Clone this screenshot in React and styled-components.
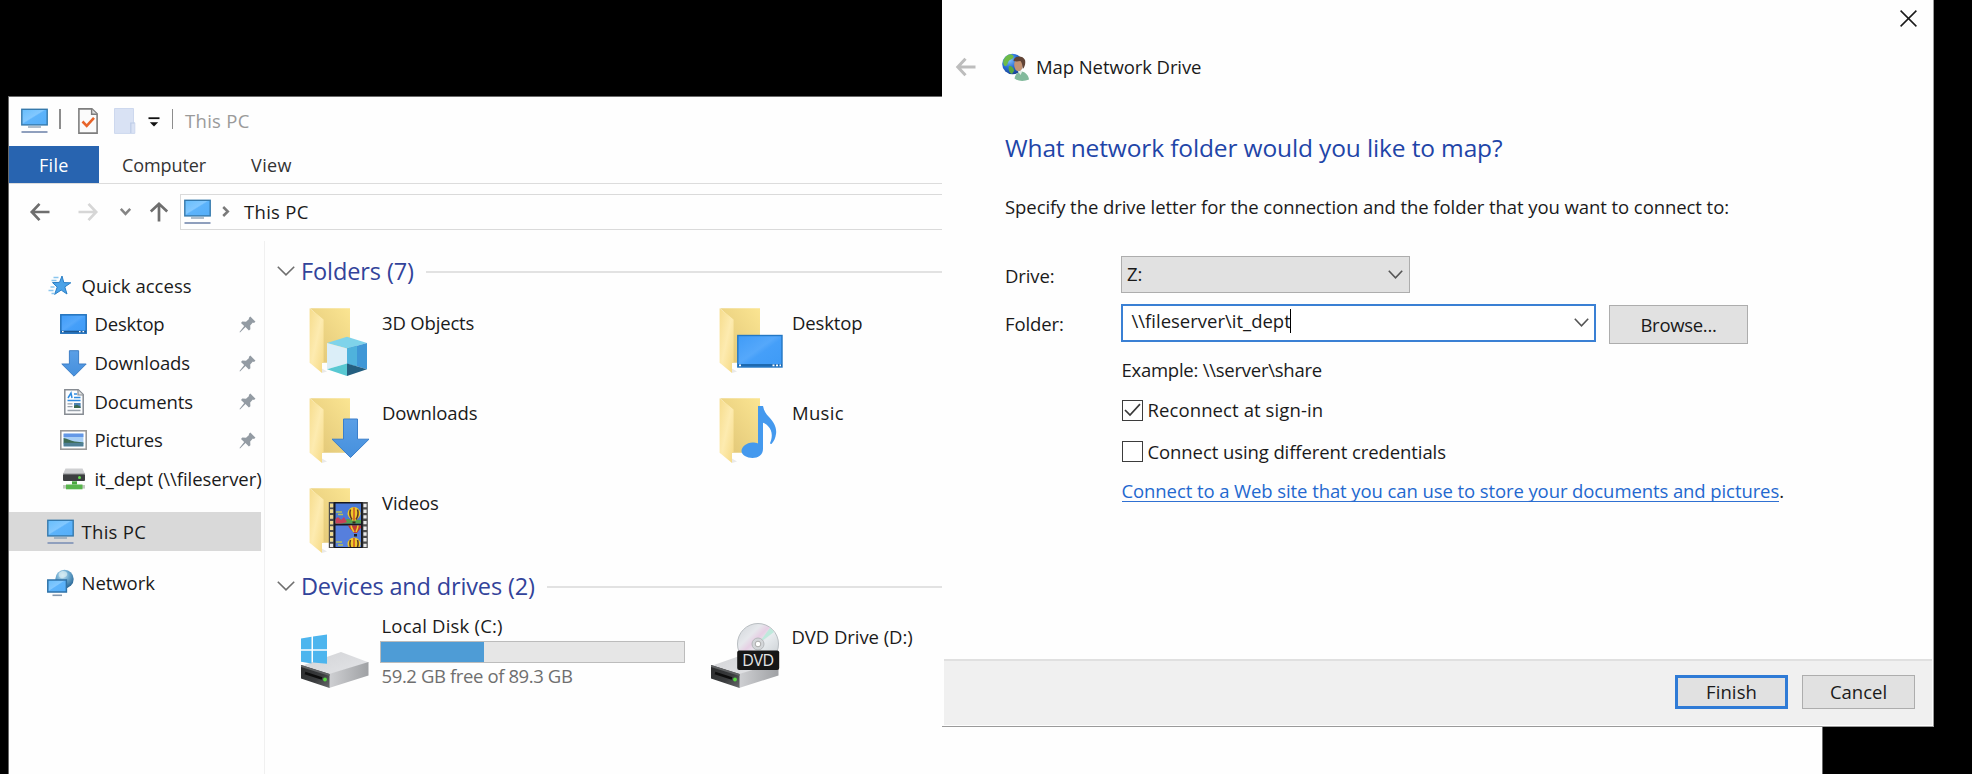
import React from "react";
import styled, { createGlobalStyle } from "styled-components";

const GlobalStyle = createGlobalStyle`
  * { box-sizing: border-box; }
  body { margin: 0; background: #000; overflow: hidden; }
`;

const Screen = styled.div`
  position: relative;
  width: 1972px;
  height: 774px;
  overflow: hidden;
  background: #000;
  color: #1a1a1a;
  font-family: "Open Sans", "Noto Sans", sans-serif;
  font-size: 18.5px;
  line-height: 26px;
`;

const Text = styled.span`
  white-space: pre;
  flex: none;
  color: ${(p) => p.$color || "inherit"};
  font-size: ${(p) => p.$size || 18.5}px;
  letter-spacing: ${(p) => p.$track || 0}px;
`;

const Glyph = styled.svg`
  display: block;
  flex: none;
  overflow: visible;
`;

/* ---------- Explorer window ---------- */

const Explorer = styled.section`
  position: absolute;
  left: 8px;
  top: 96px;
  width: 1815px;
  height: 700px;
  display: flex;
  flex-direction: column;
  background: #fefefe;
  border: 1px solid #6a6a6a;
`;

const TitleBar = styled.header`
  display: flex;
  align-items: center;
  height: 49px;
  padding: 0 0 1px 12px;
`;

const Divider = styled.i`
  width: 1.5px;
  height: 20px;
  background: #8d8d8d;
  margin: 0 ${(p) => p.$after}px 4px ${(p) => p.$before}px;
`;

const QuickButton = styled.span`
  display: flex;
  margin-right: ${(p) => p.$gap}px;
`;

const Ribbon = styled.nav`
  display: flex;
  height: 38px;
  border-bottom: 1.5px solid #dcdcdc;
`;

const RibbonTab = styled.div`
  display: flex;
  align-items: center;
  height: 37px;
  padding-left: ${(p) => p.$inset}px;
  width: ${(p) => p.$width}px;
  color: ${(p) => (p.$active ? "#fff" : "#333")};
  background: ${(p) => (p.$active ? "#2864b0" : "transparent")};
`;

const NavBar = styled.div`
  display: flex;
  align-items: center;
  height: 57px;
  padding: 0 0 2px 21px;
`;

const NavButton = styled.span`
  display: flex;
  justify-content: center;
  width: ${(p) => p.$width}px;
  margin-right: ${(p) => p.$gap}px;
`;

const AddressBar = styled.div`
  display: flex;
  flex: 1;
  align-items: center;
  height: 36px;
  padding-left: 3px;
  border: 1.5px solid #dadada;
  border-right: 0;
`;

const Panes = styled.div`
  display: flex;
  flex: 1;
`;

const Sidebar = styled.aside`
  width: 256px;
  padding-top: 25.5px;
  border-right: 1px solid #f0f0f0;
`;

const SideRow = styled.div`
  display: flex;
  align-items: center;
  width: 252px;
  height: 38.67px;
  margin-top: ${(p) => p.$before || 0}px;
  padding-left: ${(p) => (p.$child ? 51 : 38)}px;
  background: ${(p) => (p.$selected ? "#d9d9d9" : "transparent")};
`;

const SideIcon = styled.span`
  display: flex;
  flex: none;
  justify-content: center;
  width: 27px;
  margin-right: 7.5px;
`;

const PinSlot = styled.span`
  display: flex;
  margin-left: auto;
  margin-right: 5px;
`;

const Content = styled.main`
  width: 677px;
  padding: 14.5px 0 0 12px;
`;

const GroupHeader = styled.h2`
  display: flex;
  align-items: center;
  height: 30px;
  margin: ${(p) => p.$shift || 0}px 0 15px;
  font-weight: 400;
`;

const GroupRule = styled.i`
  flex: 1;
  height: 1.5px;
  margin: 3px 0 0 12px;
  background: #e2e2e2;
`;

const FolderGrid = styled.div`
  display: grid;
  grid-template-columns: 410px 1fr;
  grid-auto-rows: 90.4px;
  padding-left: 28px;
`;

const FolderTile = styled.div`
  display: flex;
`;

const FolderName = styled.div`
  padding: 9px 0 0 5px;
`;

const DriveGrid = styled.div`
  display: grid;
  grid-template-columns: 410px 1fr;
  padding-left: 23px;
`;

const DriveTile = styled.div`
  display: flex;
`;

const DriveIcon = styled.span`
  display: flex;
  padding-top: 5px;
`;

const DriveInfo = styled.div`
  display: flex;
  flex-direction: column;
  padding-top: ${(p) => p.$top}px;
  padding-left: ${(p) => p.$left || 0}px;
  margin-top: -3px;
`;

const DriveLabel = styled.div`
  padding-left: 1.5px;
`;

const Usage = styled.div`
  width: 305px;
  height: 22px;
  margin: 2px 0 0;
  border: 1.5px solid #bcbcbc;
  background: #e6e6e6;
`;

const UsageFill = styled.div`
  width: ${(p) => p.$percent}%;
  height: 100%;
  background: #4e9cd6;
`;

/* ---------- Map Network Drive dialog ---------- */

const Dialog = styled.section`
  position: absolute;
  left: 942px;
  top: 0;
  width: 992px;
  height: 727px;
  display: flex;
  flex-direction: column;
  background: #fefefe;
  border-right: 1px solid #9a9a9a;
  border-bottom: 1px solid #9a9a9a;
`;

const CloseRow = styled.div`
  display: flex;
  justify-content: flex-end;
  height: 52px;
  padding: 10px 16px 0 0;
`;

const DialogHead = styled.header`
  display: flex;
  align-items: center;
  height: 30px;
  padding-left: 14px;
`;

const DialogIcon = styled.span`
  display: flex;
  margin: 0 7px 0 26px;
`;

const Form = styled.div`
  flex: 1;
  padding-left: 63px;
`;

const Question = styled.h1`
  display: flex;
  margin: 51px 0 0;
  line-height: 30px;
  font-weight: 400;
`;

const Hint = styled.p`
  display: flex;
  margin: 31px 0 36px;
`;

const Field = styled.div`
  display: flex;
  align-items: flex-start;
  height: ${(p) => p.$height}px;
`;

const FieldLabel = styled.label`
  width: 116px;
  padding-top: 7px;
`;

const DriveSelect = styled.div`
  display: flex;
  align-items: center;
  justify-content: space-between;
  width: 289px;
  height: 37px;
  padding: 0 6px 1px 5px;
  border: 1.5px solid #adadad;
  background: #e1e1e1;
`;

const FolderInput = styled.div`
  display: flex;
  align-items: center;
  width: 475px;
  height: 38px;
  padding: 0 5px 4px 8.5px;
  border: 2px solid #3a80d4;
  background: #fff;
`;

const Caret = styled.i`
  width: 1.5px;
  height: 24px;
  margin-right: auto;
  margin-left: -1px;
  background: #000;
`;

const ListArrow = styled.span`
  display: flex;
  padding-top: 3px;
`;

const PushButton = styled.button`
  display: flex;
  align-items: center;
  justify-content: center;
  width: ${(p) => p.$width}px;
  height: ${(p) => p.$height}px;
  margin: ${(p) => p.$margin};
  padding: 0;
  color: inherit;
  font: inherit;
  background: #e1e1e1;
  border: ${(p) => (p.$primary ? "3px solid #2f7bd6" : "1.5px solid #adadad")};
`;

const Options = styled.div`
  display: flex;
  flex-direction: column;
  padding-left: 116.5px;
`;

const OptionLine = styled.div`
  display: flex;
  align-items: center;
  height: 26px;
  margin-top: ${(p) => p.$before}px;
`;

const CheckBox = styled.span`
  display: flex;
  align-items: center;
  justify-content: center;
  width: 21px;
  height: 21px;
  margin-right: 5px;
  border: 1.5px solid #3c3c3c;
  background: #fff;
`;

const WebLink = styled.a`
  display: flex;
  color: #2368cf;
  border-bottom: 1.5px solid #2f70d2;
  line-height: 21px;
`;

const DialogFooter = styled.footer`
  display: flex;
  justify-content: flex-end;
  height: 66px;
  margin: 0 1px 1px 2px;
  padding: 14px 17px 0 0;
  border-top: 2px solid #e0e0e0;
  background: #f0f0f0;
`;

/* ---------- Icons ---------- */

const Gradients = () => (
  <Glyph width="0" height="0" aria-hidden="true">
    <defs>
      <linearGradient id="screenBlue" x1="0" y1="0" x2="1" y2="1">
        <stop offset="0" stopColor="#66bdfb" />
        <stop offset="0.45" stopColor="#82c8ff" />
        <stop offset="0.5" stopColor="#5cb3fb" />
        <stop offset="1" stopColor="#55aef8" />
      </linearGradient>
      <linearGradient id="deskBlue" x1="0" y1="0" x2="1" y2="1">
        <stop offset="0" stopColor="#3f9bf7" />
        <stop offset="0.45" stopColor="#55a8fb" />
        <stop offset="0.55" stopColor="#459ff9" />
        <stop offset="1" stopColor="#3d9af6" />
      </linearGradient>
      <linearGradient id="folderBack" x1="0" y1="1" x2="1" y2="0">
        <stop offset="0" stopColor="#dfc475" />
        <stop offset="1" stopColor="#fbe592" />
      </linearGradient>
      <linearGradient id="folderFront" x1="0" y1="0" x2="1" y2="1">
        <stop offset="0" stopColor="#f6dc8c" />
        <stop offset="0.5" stopColor="#fdebb0" />
        <stop offset="1" stopColor="#f5d984" />
      </linearGradient>
      <linearGradient id="arrowBlue" x1="0" y1="0" x2="0" y2="1">
        <stop offset="0" stopColor="#5a9fe6" />
        <stop offset="1" stopColor="#4690dd" />
      </linearGradient>
      <linearGradient id="driveTop" x1="0" y1="0" x2="1" y2="1">
        <stop offset="0" stopColor="#d2d3d6" />
        <stop offset="1" stopColor="#e4e5e8" />
      </linearGradient>
      <linearGradient id="driveSide" x1="0" y1="0" x2="1" y2="0">
        <stop offset="0" stopColor="#cfd0d3" />
        <stop offset="1" stopColor="#9fa1a4" />
      </linearGradient>
      <linearGradient id="driveFace" x1="0" y1="0" x2="1" y2="1">
        <stop offset="0" stopColor="#2a2b2c" />
        <stop offset="0.6" stopColor="#3a3c3e" />
        <stop offset="1" stopColor="#6a6c6e" />
      </linearGradient>
      <radialGradient id="globe" cx="0.4" cy="0.3" r="0.7">
        <stop offset="0" stopColor="#cfe9f5" />
        <stop offset="0.5" stopColor="#6ba9cf" />
        <stop offset="1" stopColor="#2d6a99" />
      </radialGradient>
      <radialGradient id="earth" cx="0.35" cy="0.3" r="0.75">
        <stop offset="0" stopColor="#86c4fa" />
        <stop offset="0.5" stopColor="#2a70d8" />
        <stop offset="1" stopColor="#173f8f" />
      </radialGradient>
      <linearGradient id="disc" x1="0" y1="0" x2="1" y2="1">
        <stop offset="0" stopColor="#cfd4d8" />
        <stop offset="0.3" stopColor="#e6e8ec" />
        <stop offset="0.42" stopColor="#e6cfe4" />
        <stop offset="0.55" stopColor="#e8ecef" />
        <stop offset="1" stopColor="#c3c8cc" />
      </linearGradient>
    </defs>
  </Glyph>
);

const PcIcon = () => (
  <Glyph width="27" height="26" viewBox="0 0 27 26">
    <rect x="0.8" y="1.3" width="25.4" height="15.6" fill="url(#screenBlue)" stroke="#3579ac" strokeWidth="1.4" />
    <path d="M7 19h13" stroke="#8fa3b5" strokeWidth="1.4" />
    <path d="M0.5 24h26" stroke="#8f9fbd" strokeWidth="2" />
  </Glyph>
);

const CheckedPageIcon = () => (
  <Glyph width="20" height="26" viewBox="0 0 20 26">
    <path d="M0.9 0.9h13l5.2 5v19.2H0.9z" fill="#fbfbfb" stroke="#7e7e7e" strokeWidth="1.6" />
    <path d="M13.6 1v5.2h5.4" fill="#ddd" stroke="#7e7e7e" strokeWidth="1.4" />
    <path d="M4.5 13.5l4.2 4.3 7.3-8" fill="none" stroke="#e8642a" strokeWidth="2.6" />
  </Glyph>
);

const PaleFolderIcon = () => (
  <Glyph width="21" height="26" viewBox="0 0 21 26">
    <path d="M0.5 0.5h19v14.3h1.3v10.6H0.5z" fill="#d9e2f4" stroke="#cdd8ee" />
    <path d="M16.8 25V15h3.6" fill="none" stroke="#bccbe6" strokeWidth="1.2" />
  </Glyph>
);

const MenuArrowIcon = () => (
  <Glyph width="12" height="11" viewBox="0 0 12 11">
    <path d="M0.5 2.2h11" stroke="#111" strokeWidth="1.8" />
    <path d="M1.8 6.2h8.4L6 10.6z" fill="#111" />
  </Glyph>
);

const ArrowIcon = ({ color, turn = 0, size = 20, weight = 2.7 }) => (
  <Glyph width={size} height={size} viewBox="0 0 20 20">
    <path d="M19.5 10H2M9.5 1.8L1.8 10l7.7 8.2" fill="none" stroke={color} strokeWidth={weight} transform={`rotate(${turn} 10 10)`} />
  </Glyph>
);

const ChevronIcon = ({ width, height, color = "#777", weight = 1.6 }) => (
  <Glyph width={width} height={height} viewBox={`0 0 ${width} ${height}`}>
    <path d={`M0.8 0.8L${width / 2} ${height - 1.2}L${width - 0.8} 0.8`} fill="none" stroke={color} strokeWidth={weight} />
  </Glyph>
);

const CrumbIcon = () => (
  <Glyph width="8" height="11" viewBox="0 0 8 11">
    <path d="M1.2 1L5.8 5.5 1.2 10" fill="none" stroke="#7a7a7a" strokeWidth="2.5" />
  </Glyph>
);

const StarIcon = () => (
  <Glyph width="18" height="22" viewBox="4.5 0 18 22">
    <path d="M14.5 1l1.8 6.6 7 .2-6 4.1 2.2 7.1-5.8-3.9-6.6 4.3 2.6-7.3L5 7.6l7-.2z" fill="#4ba3e8" stroke="#2b7fc6" strokeWidth="1" />
    <path d="M6 2.5h5M4 5.5h5M3 12h4M1 15.5h5M4 18.5h3" stroke="#8ac5ee" strokeWidth="1.3" />
  </Glyph>
);

const DesktopIcon = () => (
  <Glyph width="27" height="20" viewBox="0 0 27 20">
    <rect x="0.8" y="0.8" width="25.4" height="18.4" fill="url(#deskBlue)" stroke="#2272bd" strokeWidth="1.5" />
    <path d="M1 17.6h25" stroke="#1d5791" strokeWidth="1.8" />
    <path d="M2 17.6h1.6M19 17.6h1.6M22.5 17.6h1.6" stroke="#fff" strokeWidth="1.4" />
  </Glyph>
);

const DownloadIcon = () => (
  <Glyph width="26" height="27" viewBox="0 0 26 27">
    <path d="M8.4 0.7h9.2V14h7.6L13 26.2 0.8 14h7.6z" fill="url(#arrowBlue)" stroke="#3f7fc6" />
  </Glyph>
);

const DocumentIcon = () => (
  <Glyph width="20" height="26" viewBox="0 0 20 26">
    <path d="M0.8 0.8h13.4l5 4.8v19.6H0.8z" fill="#fcfdfe" stroke="#868b92" strokeWidth="1.5" />
    <path d="M14 1v5h5" fill="#e3e3e3" stroke="#868b92" strokeWidth="1.2" />
    <path d="M4 9l3-5 1 5M10 5h3M10 8.5h6.5M3.5 11.5h13" fill="none" stroke="#2f8be0" strokeWidth="1.5" />
    <path d="M3.5 14.8h5M3.5 17.6h5M3.5 21.5h13" stroke="#9aa2ab" strokeWidth="1.3" />
    <rect x="10" y="14" width="6.6" height="5" fill="#4c82b4" />
    <path d="M10 19v-2.2l3-1 3.6 2V19z" fill="#3c6a50" />
  </Glyph>
);

const PictureIcon = () => (
  <Glyph width="27" height="20" viewBox="0 0 27 20">
    <rect x="0.8" y="0.8" width="25.4" height="18.4" fill="#fff" stroke="#9a9a9a" strokeWidth="1.6" />
    <rect x="3.6" y="3.6" width="19.8" height="12.8" fill="#a9cff5" />
    <rect x="3.6" y="3.6" width="19.8" height="3.4" fill="#6397e6" />
    <path d="M3.6 8c4 .5 7 3 11 3.6s6 .6 8.8 1v1H3.6z" fill="#3d6b54" />
    <path d="M3.6 12.8h19.8v3.6H3.6z" fill="#4f7f95" />
  </Glyph>
);

const NetDriveIcon = () => (
  <Glyph width="24" height="22" viewBox="0 0 24 22">
    <path d="M3.5 0.5h17l2.5 5.5H1z" fill="#cfd0d2" />
    <rect x="1" y="6" width="22" height="7" rx="1" fill="#3c3e40" />
    <path d="M1 6h22" stroke="#8d8f91" />
    <circle cx="17.5" cy="9.5" r="1.5" fill="#62e04c" />
    <path d="M10 13.3h5v3.2h-5z" fill="#4aa83f" />
    <path d="M1 18.8h22" stroke="#c2cabf" strokeWidth="3.6" />
    <path d="M4 16.5h16.5v4.8H4z" fill="#58b54c" />
  </Glyph>
);

const NetworkIcon = () => (
  <Glyph width="27" height="28" viewBox="0 0 27 28">
    <circle cx="17.5" cy="10" r="9.2" fill="url(#globe)" />
    <path d="M12 4c3-3 7-2 8 0s-1 4-4 5-5-2-4-5z" fill="#d7ecf2" opacity="0.7" />
    <rect x="0.8" y="11" width="18.6" height="12" fill="url(#screenBlue)" stroke="#2f72a8" strokeWidth="1.5" />
    <path d="M5.5 26.3h9.5" stroke="#8497ad" strokeWidth="1.6" />
  </Glyph>
);

const PinIcon = () => (
  <Glyph width="17" height="17" viewBox="0 0 17 17">
    <path d="M11.3 0.5l5.2 5.2-1.6 1.2-1-.3-2.7 3 .2 3.6-1.5 1.2-3.4-3.4L1 16.5l-.5-.5L5.2 10 2 7l1.3-1.5 3.7.3 3-2.7-.2-1.2z" fill="#939ba3" />
  </Glyph>
);

const CubeOverlay = () => (
  <g transform="translate(0 7)">
    <path d="M42 28.8L62 35l-20 5.4L22 35z" fill="#7fd3ea" />
    <path d="M22 35l20 5.4v15L22 61.2z" fill="#dbeef8" />
    <path d="M42 40.4L62 35v26.2l-20-5.8z" fill="#3f97d6" />
    <path d="M42 40.4L52 37.7v20.5l-10-2.8z" fill="#4fb2dc" />
    <path d="M22 61.2l20-5.8V68z" fill="#58c8d2" />
    <path d="M42 55.4l20 5.8L42 68z" fill="#245f80" />
  </g>
);

const DownloadOverlay = () => (
  <path d="M38.5 28h14v20.2h11.5L45.5 66.5 27 48.2h11.5z" fill="url(#arrowBlue)" stroke="#3b7fcb" />
);

const Balloon = ({ x, y }) => (
  <g transform={`translate(${x} ${y})`}>
    <path d="M-6.5-1a6.5 6.5 0 0 1 13 0c0 3-3 5-4.5 7h-4c-1.5-2-4.5-4-4.5-7z" fill="#efca2a" />
    <path d="M-3.5-5c-1 3-.5 7 1.5 10M3.5-5c1 3 .5 7-1.5 10" fill="none" stroke="#5a3326" strokeWidth="1.5" />
    <path d="M0-7V6" stroke="#c84a2a" strokeWidth="1.4" />
    <path d="M-1.5 7h3v2.5h-3z" fill="#3a2a1a" />
  </g>
);

const VideoOverlay = () => (
  <g>
    <defs>
      <clipPath id="frameTop"><rect x="30.5" y="22.5" width="25.5" height="20" /></clipPath>
      <clipPath id="frameLow"><rect x="30.5" y="44.5" width="25.5" height="21.5" /></clipPath>
    </defs>
    <rect x="23.8" y="21" width="39" height="46" fill="#4c4c4c" />
    <path d="M60 22.8v43.5M26.6 22.8v43.5" stroke="#e9e9e9" strokeWidth="3.2" strokeDasharray="3.4 2.3" />
    <path d="M26.6 22.8v38" stroke="#efd98c" strokeWidth="3.2" strokeDasharray="3.4 2.3" />
    <rect x="28.7" y="21" width="29" height="46" fill="#18191f" />
    <rect x="30.5" y="22.5" width="25.5" height="20" fill="#4a79d6" />
    <rect x="30.5" y="44.5" width="25.5" height="21.5" fill="#567fdd" />
    <g clipPath="url(#frameTop)">
      <path d="M29 40l5-3 4 3 4-2 15 1v7H29z" fill="#56a04e" />
      <path d="M29 39l4-3 3 3 3-3 3 5-6 2h-7z" fill="#c8425a" />
      <path d="M31 31h6M33 33.5h5" stroke="#b9c05a" strokeWidth="1.4" />
      <Balloon x={49} y={33.5} />
    </g>
    <g clipPath="url(#frameLow)">
      <path d="M43 44h14c-1 4-3 5-5 8h-3c-2-3-5-4-6-8z" fill="#c13a35" />
      <path d="M46 44c0 3 2 5 3 7M53 44c0 3-1 5-2 7" fill="none" stroke="#e9c92e" strokeWidth="1.6" />
      <path d="M49 53h3v2.5h-3z" fill="#222" />
      <path d="M31 61h6M33 64h5" stroke="#b9c05a" strokeWidth="1.4" />
      <Balloon x={49} y={64} />
    </g>
  </g>
);

const DesktopOverlay = () => (
  <g transform="translate(0 7.3)">
    <rect x="22.8" y="27.2" width="44.2" height="31.5" fill="url(#deskBlue)" stroke="#2377c4" strokeWidth="1.4" />
    <path d="M23 57h44" stroke="#1d69b0" strokeWidth="2.4" />
    <path d="M24 57h2M57.5 57h2M61 57h2M64.5 57h1.5" stroke="#fff" strokeWidth="1.8" />
  </g>
);

const MusicOverlay = () => (
  <path transform="translate(0 7)" d="M43 8h5c1 5 3 8 6 11 5 5 8 11 7 17-.5 4-2 7-4.5 10l-1.6-.6c3-7 2.5-13-2-17.5-1.5-1.6-3-2.6-4.9-3.2V51c0 6-5 9-10.5 9S26.500 57 26.500 53s5-8.500 11-8.500c2 0 4 .3 5.500 1z" fill="#4499ee" />
);

const FolderIcon = ({ children }) => (
  <Glyph width="72" height="80" viewBox="0 0 72 80">
    <path d="M5 7.2h40v54.5H17V18z" fill="url(#folderBack)" />
    <path d="M4.6 7.2l14 11.3v42.4l-1.6 1.2V72L4.6 61.8z" fill="url(#folderFront)" />
    <path d="M17 72l5-1.5-5-3z" fill="#e9e9e9" />
    {children}
  </Glyph>
);

const DriveBody = () => (
  <g>
    <path d="M1 45L41 31l28 10.5L29 53.5z" fill="url(#driveTop)" />
    <path d="M29 53l39.5-12v13.5L29 67z" fill="url(#driveSide)" />
    <path d="M1 44l28.5 9v14L1 57.5z" fill="url(#driveFace)" />
    <path d="M1 44l28.5 9v2L1 46z" fill="#606264" />
    <path d="M5 52l17 5.5" stroke="#0d0d0d" strokeWidth="2.5" />
    <circle cx="25" cy="58.5" r="1.9" fill="#55d83f" />
  </g>
);

const LocalDiskIcon = () => (
  <Glyph width="80" height="72" viewBox="0 0 80 72">
    <DriveBody />
    <path d="M1 17.5l10.5-1.7v12.5H1zM13 15.5L27 13.5v14.8H13zM1 29.8h10.5v12.6L1 40.8zM13 29.8h14v12.9l-14-1.3z" fill="#4db5ee" />
  </Glyph>
);

const DvdIcon = () => (
  <Glyph width="80" height="72" viewBox="0 0 80 72">
    <DriveBody />
    <circle cx="48" cy="23" r="20.5" fill="url(#disc)" stroke="#b9bec2" />
    <path d="M48 23L60 7a20 20 0 0 1 4 4z" fill="#bfe9dc" />
    <circle cx="48" cy="23" r="6" fill="#d3d6d9" stroke="#b5b8bb" />
    <circle cx="48" cy="23" r="2.8" fill="#fff" stroke="#aaa" />
    <rect x="27.2" y="29.5" width="42" height="19.5" rx="2" fill="#161616" />
    <text x="48.2" y="45" textAnchor="middle" fontFamily="Open Sans, sans-serif" fontSize="16" fill="#e4e4e4" textLength="32">DVD</text>
  </Glyph>
);

const MapDriveIcon = () => (
  <Glyph width="27" height="28" viewBox="0 0 27 28">
    <circle cx="10.5" cy="11" r="10.3" fill="url(#earth)" />
    <path d="M1.5 7C4 2 8 0 10.5 2s0 4-2.5 5-2 5-4 6-3.5-3-2.5-6z" fill="#6dbb48" />
    <path d="M7 13c3 0 5 2 5 5l-2 3c-3-1-4-5-3-8z" fill="#58a83f" />
    <path d="M12.5 25.5c1-5 4-7 7.5-7 4 1 6.5 4 7 8-4.5 2-11 2-14.5-1z" fill="#82ba9c" />
    <path d="M15 17l3.5 5 2-4z" fill="#e3ede8" />
    <ellipse cx="16.5" cy="12" rx="4.3" ry="6.2" fill="#c49474" />
    <path d="M11.5 8c0-5 9-6.5 11.5-1 .8 3-.2 7-2.2 9-.3-4-.8-6-2.3-8-3 .6-5 .5-7 0z" fill="#614436" />
  </Glyph>
);

const CloseIcon = () => (
  <Glyph width="17" height="17" viewBox="0 0 17 17">
    <path d="M0.6 0.6l15.8 15.8M16.4 0.6L0.6 16.4" stroke="#1a1a1a" strokeWidth="1.5" />
  </Glyph>
);

const TickIcon = () => (
  <Glyph width="17" height="14" viewBox="0 0 17 14">
    <path d="M1 7l5 5L16 1.2" fill="none" stroke="#3a3a3a" strokeWidth="1.7" />
  </Glyph>
);

/* ---------- Data ---------- */

const places = [
  { name: "Quick access", track: 0.02, Icon: StarIcon },
  { name: "Desktop", track: -0.2, Icon: DesktopIcon, child: true, pinned: true },
  { name: "Downloads", track: -0.1, Icon: DownloadIcon, child: true, pinned: true },
  { name: "Documents", track: -0.05, Icon: DocumentIcon, child: true, pinned: true },
  { name: "Pictures", track: -0.15, Icon: PictureIcon, child: true, pinned: true },
  { name: "it_dept (\\\\fileserver)", track: -0.05, Icon: NetDriveIcon, child: true },
  { name: "This PC", track: 0.3, Icon: PcIcon, selected: true, before: 14 },
  { name: "Network", track: -0.05, Icon: NetworkIcon, before: 12.5 },
];

const folders = [
  { name: "3D Objects", track: -0.17, Overlay: CubeOverlay },
  { name: "Desktop", track: -0.15, Overlay: DesktopOverlay },
  { name: "Downloads", track: -0.12, Overlay: DownloadOverlay },
  { name: "Music", track: 0.3, Overlay: MusicOverlay },
  { name: "Videos", track: -0.1, Overlay: VideoOverlay },
];

const Group = ({ title, track, shift }) => (
  <GroupHeader $shift={shift}>
    <ChevronIcon width={18} height={10} color="#6f6f6f" />
    <Text $size={23.5} $track={track} $color="#32439a">{" " + title}</Text>
    <GroupRule />
  </GroupHeader>
);

const ExplorerWindow = () => (
  <Explorer>
    <TitleBar>
      <PcIcon />
      <Divider $before={11} $after={17} />
      <QuickButton $gap={16}><CheckedPageIcon /></QuickButton>
      <QuickButton $gap={13}><PaleFolderIcon /></QuickButton>
      <QuickButton $gap={0}><MenuArrowIcon /></QuickButton>
      <Divider $before={12} $after={12} />
      <Text $track={0.3} $color="#9a9a9a">This PC</Text>
    </TitleBar>
    <Ribbon>
      <RibbonTab $active $width={90} $inset={30}><Text $size={18} $track={0.3}>File</Text></RibbonTab>
      <RibbonTab $width={128} $inset={23}><Text $size={18} $track={-0.1}>Computer</Text></RibbonTab>
      <RibbonTab $width={90} $inset={24}><Text $size={18} $track={0.4}>View</Text></RibbonTab>
    </Ribbon>
    <NavBar>
      <NavButton $width={20} $gap={28}><ArrowIcon color="#6e6e6e" /></NavButton>
      <NavButton $width={20} $gap={21}><ArrowIcon color="#d6d6d6" turn={180} /></NavButton>
      <NavButton $width={12} $gap={18}><ChevronIcon width={11} height={7} color="#858585" weight={2.5} /></NavButton>
      <NavButton $width={20} $gap={11}><ArrowIcon color="#6e6e6e" turn={90} /></NavButton>
      <AddressBar>
        <PcIcon />
        <NavButton $width={29} $gap={4}><CrumbIcon /></NavButton>
        <Text $track={0.3}>This PC</Text>
      </AddressBar>
    </NavBar>
    <Panes>
      <Sidebar>
        {places.map(({ name, track, Icon, child, pinned, selected, before }) => (
          <SideRow key={name} $child={child} $selected={selected} $before={before}>
            <SideIcon><Icon /></SideIcon>
            <Text $track={track}>{name}</Text>
            {pinned && <PinSlot><PinIcon /></PinSlot>}
          </SideRow>
        ))}
      </Sidebar>
      <Content>
        <Group title="Folders (7)" track={-0.1} />
        <FolderGrid>
          {folders.map(({ name, track, Overlay }) => (
            <FolderTile key={name}>
              <FolderIcon><Overlay /></FolderIcon>
              <FolderName><Text $track={track}>{name}</Text></FolderName>
            </FolderTile>
          ))}
        </FolderGrid>
        <Group title="Devices and drives (2)" track={-0.15} shift={-1} />
        <DriveGrid>
          <DriveTile>
            <DriveIcon><LocalDiskIcon /></DriveIcon>
            <DriveInfo $top={0}>
              <DriveLabel><Text $track={0.2}>Local Disk (C:)</Text></DriveLabel>
              <Usage><UsageFill $percent={33.9} /></Usage>
              <DriveLabel><Text $track={-0.39} $color="#6f6f6f">59.2 GB free of 89.3 GB</Text></DriveLabel>
            </DriveInfo>
          </DriveTile>
          <DriveTile>
            <DriveIcon><DvdIcon /></DriveIcon>
            <DriveInfo $top={11} $left={1.5}>
              <Text $track={-0.06}>DVD Drive (D:)</Text>
            </DriveInfo>
          </DriveTile>
        </DriveGrid>
      </Content>
    </Panes>
  </Explorer>
);

const MapDriveDialog = () => (
  <Dialog>
    <CloseRow><CloseIcon /></CloseRow>
    <DialogHead>
      <ArrowIcon color="#bdbdbd" weight={3} />
      <DialogIcon><MapDriveIcon /></DialogIcon>
      <Text $track={-0.08}>Map Network Drive</Text>
    </DialogHead>
    <Form>
      <Question><Text $size={24.5} $track={-0.13} $color="#1f45a8">What network folder would you like to map?</Text></Question>
      <Hint><Text $track={-0.07}>Specify the drive letter for the connection and the folder that you want to connect to:</Text></Hint>
      <Field $height={48}>
        <FieldLabel><Text $track={-0.1}>Drive:</Text></FieldLabel>
        <DriveSelect>
          <Text>Z:</Text>
          <ChevronIcon width={15} height={9} color="#555" />
        </DriveSelect>
      </Field>
      <Field $height={52}>
        <FieldLabel><Text $track={-0.1}>Folder:</Text></FieldLabel>
        <FolderInput>
          <Text>{"\\\\fileserver\\it_dept"}</Text>
          <Caret />
          <ListArrow><ChevronIcon width={15} height={9} color="#555" /></ListArrow>
        </FolderInput>
        <PushButton $width={139} $height={39} $margin="1px 0 0 13px"><Text $track={-0.3}>Browse...</Text></PushButton>
      </Field>
      <Options>
        <OptionLine $before={1}><Text $track={-0.25}>{"Example: \\\\server\\share"}</Text></OptionLine>
        <OptionLine $before={14}><CheckBox><TickIcon /></CheckBox><Text $track={0.1}>Reconnect at sign-in</Text></OptionLine>
        <OptionLine $before={15.5}><CheckBox /><Text $track={-0.09}>Connect using different credentials</Text></OptionLine>
        <OptionLine $before={13}>
          <WebLink><Text $track={-0.09}>Connect to a Web site that you can use to store your documents and pictures</Text></WebLink>
          <Text>.</Text>
        </OptionLine>
      </Options>
    </Form>
    <DialogFooter>
      <PushButton $primary $width={113} $height={34} $margin="0 14px 0 0"><Text $track={0.1}>Finish</Text></PushButton>
      <PushButton $width={113} $height={34} $margin="0"><Text>Cancel</Text></PushButton>
    </DialogFooter>
  </Dialog>
);

export default function App() {
  return (
    <Screen>
      <GlobalStyle />
      <Gradients />
      <ExplorerWindow />
      <MapDriveDialog />
    </Screen>
  );
}
